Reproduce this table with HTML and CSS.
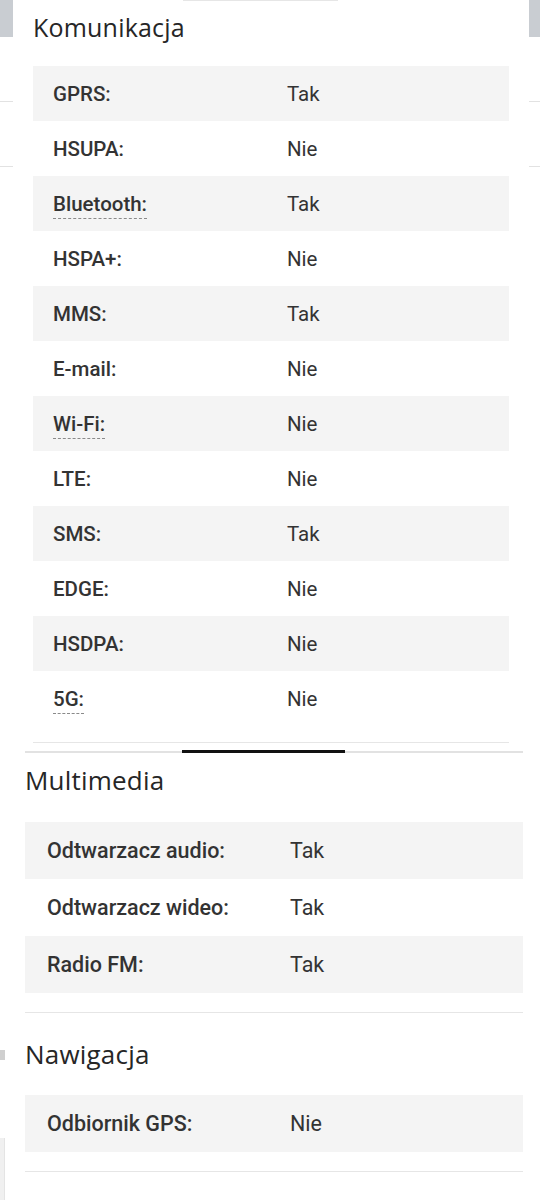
FILE: index.html
```html
<!DOCTYPE html>
<html lang="pl">
<head>
<meta charset="utf-8">
<title>Specyfikacja</title>
<link rel="stylesheet" href="styles.css">
</head>
<body>
<div class="peek peek-tl"></div>
<div class="peek peek-tr"></div>
<div class="peek peek-line pl1"></div>
<div class="peek peek-line pr1"></div>
<div class="peek peek-line pl2"></div>
<div class="peek peek-line pr2"></div>
<div class="peek peek-mark"></div>
<div class="peek peek-bar"></div>

<section class="card">
  <div class="card-tab"></div>
  <h2 class="title title-top">Komunikacja</h2>
  <div class="spec spec-top">
    <div class="row"><span class="label">GPRS:</span><span class="value">Tak</span></div>
    <div class="row"><span class="label">HSUPA:</span><span class="value">Nie</span></div>
    <div class="row"><span class="label"><span class="hint">Bluetooth:</span></span><span class="value">Tak</span></div>
    <div class="row"><span class="label">HSPA+:</span><span class="value">Nie</span></div>
    <div class="row"><span class="label">MMS:</span><span class="value">Tak</span></div>
    <div class="row"><span class="label">E-mail:</span><span class="value">Nie</span></div>
    <div class="row"><span class="label"><span class="hint">Wi-Fi:</span></span><span class="value">Nie</span></div>
    <div class="row"><span class="label">LTE:</span><span class="value">Nie</span></div>
    <div class="row"><span class="label">SMS:</span><span class="value">Tak</span></div>
    <div class="row"><span class="label">EDGE:</span><span class="value">Nie</span></div>
    <div class="row"><span class="label">HSDPA:</span><span class="value">Nie</span></div>
    <div class="row"><span class="label"><span class="hint">5G:</span></span><span class="value">Nie</span></div>
  </div>
  <div class="card-rule"></div>
</section>

<main class="page">
  <div class="tabbar"><div class="tab-active"></div></div>
  <h2 class="title title-mm">Multimedia</h2>
  <div class="spec spec-main">
    <div class="row"><span class="label">Odtwarzacz audio:</span><span class="value">Tak</span></div>
    <div class="row"><span class="label">Odtwarzacz wideo:</span><span class="value">Tak</span></div>
    <div class="row"><span class="label">Radio FM:</span><span class="value">Tak</span></div>
  </div>
  <div class="rule rule-1"></div>
  <h2 class="title title-nav">Nawigacja</h2>
  <div class="spec spec-main">
    <div class="row"><span class="label">Odbiornik GPS:</span><span class="value">Nie</span></div>
  </div>
  <div class="rule rule-2"></div>
</main>
</body>
</html>
```
FILE: styles.css
```css
html, body {
  margin: 0;
  padding: 0;
}
body {
  position: relative;
  width: 540px;
  height: 1200px;
  overflow: hidden;
  background: #ffffff;
  font-family: Roboto, "Liberation Sans", sans-serif;
  color: #333333;
}

/* background slivers of neighbouring slides */
.peek { position: absolute; z-index: 0; }
.peek-tl { left: 0; top: 0; width: 13px; height: 37px; background: #c9cdd2; }
.peek-tr { right: 0; top: 0; width: 11px; height: 37px; background: #c9cdd2; }
.peek-line { height: 1px; background: #e2e2e2; }
.pl1 { left: 0; top: 101px; width: 14px; }
.pr1 { right: 0; top: 101px; width: 11px; }
.pl2 { left: 0; top: 166px; width: 13px; }
.pr2 { right: 0; top: 166px; width: 11px; }
.peek-mark { left: 0; top: 1050px; width: 5px; height: 10px; background: #cfcfcf; }
.peek-bar { left: 0; top: 1138px; width: 4px; height: 62px; background: #f0f0f0; border-right: 1px solid #e4e4e4; }

/* upper (scaled) slide */
.card {
  position: relative;
  z-index: 1;
  margin-left: 13px;
  width: 515px;
  height: 750px;
  background: #ffffff;
  display: flex;
  flex-direction: column;
}
.card-tab {
  margin-left: 170px;
  width: 155px;
  height: 1px;
  background: #e6e6e6;
}
.title {
  margin: 0;
  font-family: "Open Sans", "Liberation Sans", sans-serif;
  font-weight: 500;
  color: #262626;
  line-height: 32px;
  letter-spacing: 0.2px;
}
.title-top {
  font-size: 25px;
  margin: 10px 0 0 20px;
}
.spec-top {
  margin: 23px 0 0 20px;
  width: 476px;
}
.spec { display: flex; flex-direction: column; }
.row {
  display: flex;
  align-items: center;
}
.row:nth-child(odd) { background: #f4f4f4; }
.spec-top .row { height: 55px; font-size: 20.5px; }
.spec-top .label { width: 234px; padding-left: 20px; }
.label { font-weight: 500; color: #333333; }
.value { font-weight: 400; color: #333333; }
.hint {
  border-bottom: 1px dashed #8a8a8a;
  padding-bottom: 2px;
}
.card-rule {
  margin: 16px 0 0 20px;
  width: 476px;
  height: 1px;
  background: #e6e6e6;
}

/* lower slide */
.page {
  position: relative;
  z-index: 1;
  margin: 0 17px 0 25px;
  display: flex;
  flex-direction: column;
}
.tabbar {
  height: 3px;
  display: flex;
  align-items: center;
  padding-left: 157px;
  background: linear-gradient(#ffffff 0, #ffffff 0.5px, #e2e2e2 0.5px, #e2e2e2 2.5px, #ffffff 2.5px);
}
.tab-active {
  width: 163px;
  height: 3px;
  background: #111111;
}
.title-mm { font-size: 26px; margin-top: 11px; }
.spec-main { margin-top: 26px; }
.spec-main .row { height: 57px; font-size: 21.5px; }
.spec-main .label { width: 243px; padding-left: 22px; }
.rule { height: 1px; background: #e6e6e6; }
.rule-1 { margin-top: 19px; }
.title-nav { font-size: 26px; margin-top: 25px; }
.title-nav + .spec-main { margin-top: 25px; }
.rule-2 { margin-top: 19px; }
```
